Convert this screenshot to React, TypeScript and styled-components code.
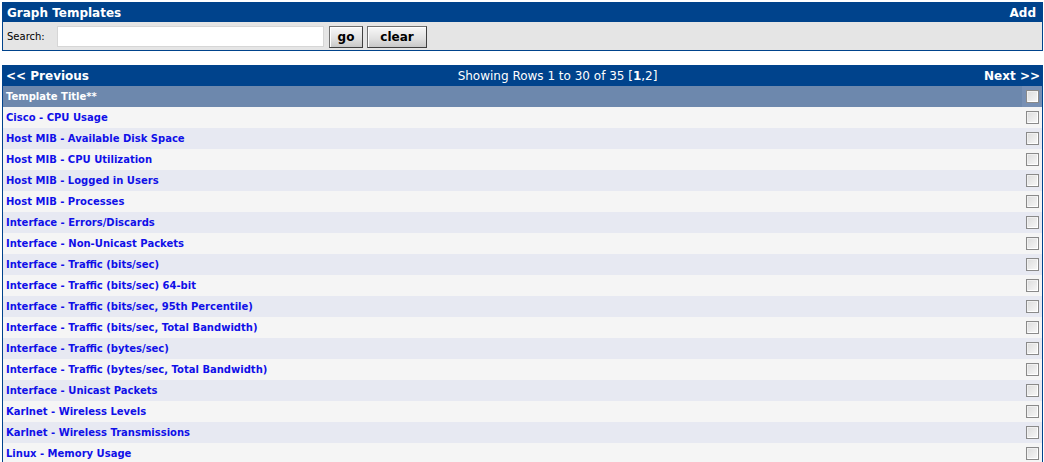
import React from "react";
import styled, {createGlobalStyle} from "styled-components";

const GlobalStyle = createGlobalStyle`
  html, body {
    margin: 0;
    padding: 0;
    background: #ffffff;
  }

  body {
    padding: 2px 1px 0 2px;
    font-family: "DejaVu Sans", Verdana, sans-serif;
  }
`

const templates = [
    "Cisco - CPU Usage",
    "Host MIB - Available Disk Space",
    "Host MIB - CPU Utilization",
    "Host MIB - Logged in Users",
    "Host MIB - Processes",
    "Interface - Errors/Discards",
    "Interface - Non-Unicast Packets",
    "Interface - Traffic (bits/sec)",
    "Interface - Traffic (bits/sec) 64-bit",
    "Interface - Traffic (bits/sec, 95th Percentile)",
    "Interface - Traffic (bits/sec, Total Bandwidth)",
    "Interface - Traffic (bytes/sec)",
    "Interface - Traffic (bytes/sec, Total Bandwidth)",
    "Interface - Unicast Packets",
    "Karlnet - Wireless Levels",
    "Karlnet - Wireless Transmissions",
    "Linux - Memory Usage",
]

const App: React.FC = () => {
    return (
        <>
            <GlobalStyle/>
            <Panel>
                <TitleBar>
                    <span>Graph Templates</span>
                    <a>Add</a>
                </TitleBar>
                <SearchRow>
                    <label>Search:</label>
                    <SearchInput type="text"/>
                    <GreyButton $width={34}>go</GreyButton>
                    <GreyButton $width={60}>clear</GreyButton>
                </SearchRow>
            </Panel>

            <ListPanel>
                <NavBar>
                    <a>&lt;&lt; Previous</a>
                    <span className={"showing"}>Showing Rows 1 to 30 of 35 [<b>1</b>,2]</span>
                    <a>Next &gt;&gt;</a>
                </NavBar>
                <HeaderRow>
                    <div className={"title"}>Template Title**</div>
                    <CheckCell $header><Check/></CheckCell>
                </HeaderRow>
                {templates.map((t, i) => <Row key={t} $alt={i % 2 !== 0}>
                    <RowLink>{t}</RowLink>
                    <CheckCell><Check/></CheckCell>
                </Row>)}
            </ListPanel>
        </>
    )
};

const Panel = styled.div`
  border: 1px solid #00438C;
  border-top: none;
  background: #E5E5E5;
`

const TitleBar = styled.div`
  height: 20px;
  box-sizing: border-box;
  padding: 2px 6px 0 4px;
  background: #00438C;
  color: #ffffff;
  display: flex;
  align-items: center;
  justify-content: space-between;
  font-size: 12px;
  font-weight: bold;
`

const SearchRow = styled.div`
  height: 28px;
  display: flex;
  align-items: center;
  padding: 1px 4px 0;
  box-sizing: border-box;
  font-size: 10px;
  color: #000000;

  label {
    width: 50px;
  }
`

const SearchInput = styled.input`
  width: 267px;
  height: 21px;
  box-sizing: border-box;
  border: 1px solid #D6D6D6;
  background: #ffffff;
  margin-right: 5px;
  padding: 0 2px;
`

const GreyButton = styled.button<{ $width: number }>`
  width: ${p => p.$width}px;
  height: 22px;
  box-sizing: border-box;
  margin-right: 4px;
  padding: 0;
  border: 1px solid #707070;
  border-right-color: #404040;
  border-bottom-color: #404040;
  background: linear-gradient(180deg, #F8F8F8 0%, #E0E0E0 60%, #C8C8C8 100%);
  font-family: "DejaVu Sans", Verdana, sans-serif;
  font-size: 12px;
  font-weight: bold;
  color: #000000;
  box-shadow: inset 1px 1px 0 #ffffff;
`

const ListPanel = styled.div`
  margin-top: 14px;
  border-left: 1px solid #00438C;
  border-right: 1px solid #00438C;
`

const NavBar = styled.div`
  height: 21px;
  background: #00438C;
  color: #ffffff;
  display: flex;
  align-items: center;
  justify-content: space-between;
  padding: 0 2px 0 3px;
  font-size: 12px;

  a {
    font-weight: bold;
    cursor: pointer;
  }

  .showing {
    margin-left: 42px;
  }
`

const HeaderRow = styled.div`
  height: 21px;
  background: #6D88AD;
  color: #ffffff;
  display: flex;
  align-items: center;
  font-size: 10px;
  font-weight: bold;

  .title {
    flex: 1;
    padding-left: 3px;
  }
`

const Row = styled.div<{ $alt?: boolean }>`
  height: 21px;
  background: ${p => p.$alt ? "#E7E9F2" : "#F5F5F5"};
  display: flex;
  align-items: center;
`

const RowLink = styled.a`
  flex: 1;
  padding-left: 3px;
  font-size: 10px;
  font-weight: bold;
  color: #1010E8;
  cursor: pointer;
`

const CheckCell = styled.div<{ $header?: boolean }>`
  width: 20px;
  height: 100%;
  display: flex;
  align-items: center;
  justify-content: center;
  background: ${p => p.$header ? "#7890B4" : "transparent"};
`

const Check = styled.span`
  display: block;
  width: 13px;
  height: 13px;
  box-sizing: border-box;
  border: 1px solid #8A8A8A;
  background: linear-gradient(135deg, #DCDCDC 0%, #F8F8F8 100%);
  box-shadow: inset 1px 1px 0 #F0F0F0, inset -1px -1px 0 #FFFFFF;
`

export default App;
